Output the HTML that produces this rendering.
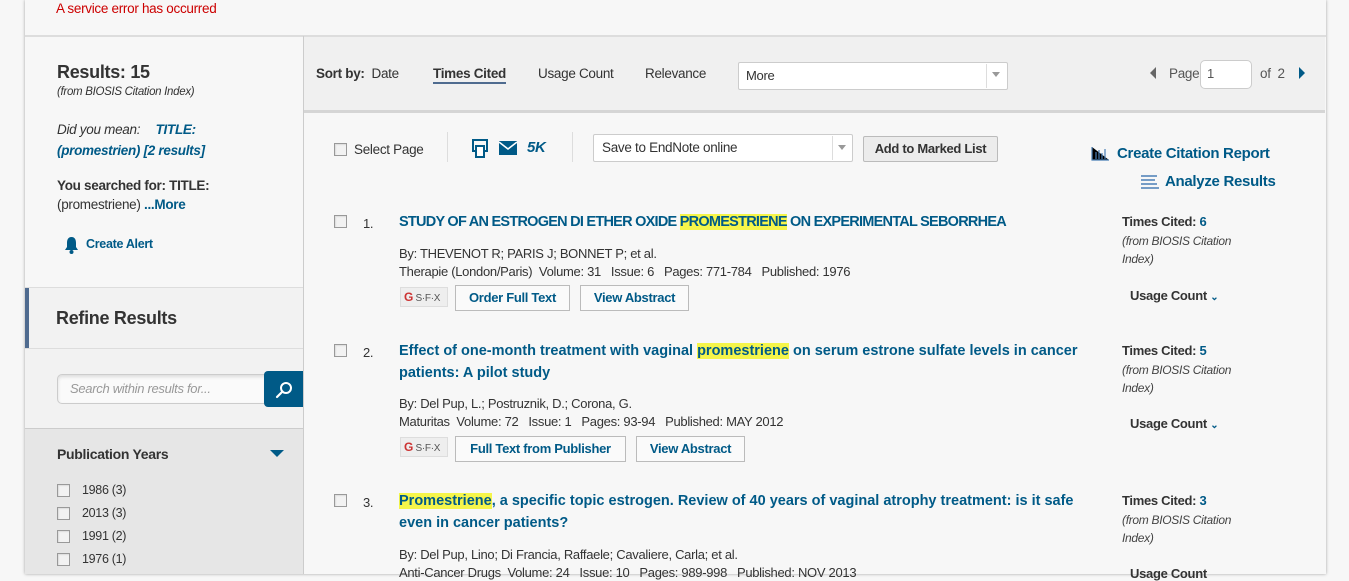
<!DOCTYPE html>
<html><head><meta charset="utf-8"><style>
*{box-sizing:border-box;margin:0;padding:0}
body{width:1349px;height:574px;overflow:hidden;background:#f7f7f7;font-family:"Liberation Sans",sans-serif;color:#333;position:relative;font-size:13px;letter-spacing:-0.3px}
.a{position:absolute;white-space:nowrap}
.wrap{position:absolute;left:25px;top:0;width:1301px;height:574px;background:#f7f7f7;box-shadow:0 0 3px rgba(0,0,0,.35)}
.blue{color:#005a87}
.b{font-weight:bold}
.cb{position:absolute;width:13px;height:13px;border:1px solid #999;background:#f2f2f2;box-shadow:inset 1px 1px 1px #ddd}
.btn{position:absolute;height:26px;border:1px solid #bbb;background:#fafafa;color:#005a87;font-weight:bold;font-size:13px;text-align:center;line-height:24px}
.hl{background:#f5f54a}
.title{color:#005a87;font-weight:bold;font-size:14.5px;letter-spacing:0}
.sfx{position:absolute;width:48px;height:20px;background:#eee;border:1px solid #ddd;font-size:10px;color:#555;line-height:18px;padding-left:3px}
.sfx i{color:#c33;font-style:normal;font-weight:bold;font-size:12px}
.tc{font-weight:bold;font-size:13px}
.it{font-style:italic;font-size:12px;color:#444;line-height:18px}
</style></head><body>
<div class="wrap"></div>
<div class="a" style="left:56px;top:1px;color:#cc0000;font-size:13.5px">A service error has occurred</div>
<div class="a" style="left:25px;top:35px;width:1301px;height:2px;background:#ddd"></div>
<!-- sidebar -->
<div class="a" style="left:303px;top:36px;width:1px;height:538px;background:#ccc"></div>
<div class="a b" style="left:57px;top:62px;font-size:18px;color:#333">Results: 15</div>
<div class="a" style="left:57px;top:86px;font-size:11.5px;font-style:italic">(from BIOSIS Citation Index)</div>
<div class="a" style="left:57px;top:122px;font-size:13.5px;font-style:italic">Did you mean: <span class="blue b" style="margin-left:12px">TITLE:</span></div>
<div class="a blue b" style="left:57px;top:143px;font-size:13.5px;font-style:italic">(promestrien) [2 results]</div>
<div class="a b" style="left:57px;top:178px;font-size:13.5px">You searched for: TITLE:</div>
<div class="a" style="left:57px;top:197px;font-size:13.5px">(promestriene) <span class="blue b">...More</span></div>
<svg class="a" style="left:63px;top:236px" width="17" height="18" viewBox="0 0 17 18"><path d="M8.5 1C5 1 4 4 4 7v4l-2 3h13l-2-3V7c0-3-1-6-4.5-6z" fill="#005a87"/><circle cx="8.5" cy="16" r="2" fill="#005a87"/></svg>
<div class="a blue b" style="left:86px;top:237px;font-size:12.5px">Create Alert</div>
<div class="a" style="left:25px;top:287px;width:278px;height:1px;background:#ddd"></div>
<div class="a" style="left:25px;top:288px;width:278px;height:60px;background:#f2f2f2;border-left:4px solid #4f6b8f"></div>
<div class="a b" style="left:56px;top:308px;font-size:18px">Refine Results</div>
<div class="a" style="left:25px;top:348px;width:278px;height:1px;background:#ddd"></div>
<div class="a" style="left:25px;top:349px;width:278px;height:79px;background:#f2f2f2"></div>
<div class="a" style="left:57px;top:374px;width:210px;height:30px;border:1px solid #ccc;border-radius:5px 0 0 5px;background:#fafafa;box-shadow:inset 0 2px 3px #ddd"></div>
<div class="a" style="left:70px;top:381px;font-size:13px;font-style:italic;color:#999">Search within results for...</div>
<div class="a" style="left:264px;top:371px;width:39px;height:36px;background:#005a87;border-radius:4px 0 0 4px"></div>
<svg class="a" style="left:274px;top:380px" width="20" height="20" viewBox="0 0 20 20"><circle cx="12" cy="8" r="5" fill="none" stroke="#fff" stroke-width="2"/><path d="M8.5 11.5L3 17" stroke="#fff" stroke-width="2.2" stroke-linecap="round"/></svg>
<div class="a" style="left:25px;top:428px;width:278px;height:1px;background:#ccc"></div>
<div class="a" style="left:25px;top:429px;width:278px;height:145px;background:#e6e6e6"></div>
<div class="a b" style="left:57px;top:446px;font-size:14px">Publication Years</div>
<div class="a" style="left:270px;top:450px;width:0;height:0;border-left:7px solid transparent;border-right:7px solid transparent;border-top:7px solid #005a87"></div>
<div class="cb" style="left:57px;top:484px"></div><div class="a" style="left:82px;top:483px;font-size:12.5px">1986 (3)</div>
<div class="cb" style="left:57px;top:507px"></div><div class="a" style="left:82px;top:506px;font-size:12.5px">2013 (3)</div>
<div class="cb" style="left:57px;top:530px"></div><div class="a" style="left:82px;top:529px;font-size:12.5px">1991 (2)</div>
<div class="cb" style="left:57px;top:553px"></div><div class="a" style="left:82px;top:552px;font-size:12.5px">1976 (1)</div>
<!-- sort bar -->
<div class="a" style="left:304px;top:37px;width:1021px;height:73px;background:#f0f0f0"></div>
<div class="a" style="left:304px;top:110px;width:1021px;height:3px;background:#d5d5d5"></div>
<div class="a" style="left:316px;top:66px;font-size:13.5px"><b>Sort by:</b>&nbsp; Date</div>
<div class="a b" style="left:433px;top:66px;font-size:13.5px;border-bottom:2px solid #4f6b8f;padding-bottom:1px">Times Cited</div>
<div class="a" style="left:538px;top:66px;font-size:13.5px">Usage Count</div>
<div class="a" style="left:645px;top:66px;font-size:13.5px">Relevance</div>
<div class="a" style="left:738px;top:62px;width:270px;height:28px;border:1px solid #ccc;background:#fff;border-radius:2px"></div>
<div class="a" style="left:746px;top:68px;font-size:13px">More</div>
<div class="a" style="left:986px;top:64px;width:1px;height:24px;background:#ddd"></div>
<div class="a" style="left:992px;top:72px;border-left:4px solid transparent;border-right:4px solid transparent;border-top:5px solid #999"></div>
<div class="a" style="left:1150px;top:67px;border-top:6px solid transparent;border-bottom:6px solid transparent;border-right:6px solid #666"></div>
<div class="a" style="left:1169px;top:66px;font-size:13.5px;color:#555">Page</div>
<div class="a" style="left:1200px;top:60px;width:52px;height:29px;border:1px solid #ccc;border-radius:5px;background:#fff"></div>
<div class="a" style="left:1207px;top:66px;font-size:13px;color:#555">1</div>
<div class="a" style="left:1260px;top:66px;font-size:13.5px;color:#555">of &nbsp;2</div>
<div class="a" style="left:1299px;top:67px;border-top:6px solid transparent;border-bottom:6px solid transparent;border-left:6px solid #005a87"></div>
<!-- toolbar -->
<div class="cb" style="left:334px;top:143px"></div>
<div class="a" style="left:354px;top:142px;font-size:13.5px">Select Page</div>
<div class="a" style="left:447px;top:132px;width:1px;height:30px;background:#ddd"></div>
<svg class="a" style="left:471px;top:139px" width="18" height="19" viewBox="0 0 18 19"><rect x="2" y="1" width="14" height="11" fill="none" stroke="#005a87" stroke-width="2"/><rect x="5" y="7" width="8" height="11" fill="#fff" stroke="#005a87" stroke-width="2"/></svg>
<svg class="a" style="left:499px;top:141px" width="18" height="14" viewBox="0 0 18 14"><rect x="0" y="0" width="18" height="14" fill="#005a87"/><path d="M0 1l9 7 9-7" fill="none" stroke="#fff" stroke-width="1.5"/></svg>
<div class="a blue b" style="left:527px;top:139px;font-size:15px;font-style:italic">5K</div>
<div class="a" style="left:572px;top:132px;width:1px;height:30px;background:#ddd"></div>
<div class="a" style="left:593px;top:134px;width:260px;height:28px;border:1px solid #ccc;background:#fff;border-radius:2px"></div>
<div class="a" style="left:602px;top:140px;font-size:13.5px">Save to EndNote online</div>
<div class="a" style="left:832px;top:136px;width:1px;height:24px;background:#ddd"></div>
<div class="a" style="left:838px;top:145px;border-left:4px solid transparent;border-right:4px solid transparent;border-top:5px solid #999"></div>
<div class="a b" style="left:863px;top:136px;width:135px;height:26px;border:1px solid #bbb;background:#ececec;border-radius:2px;text-align:center;line-height:24px;font-size:13px">Add to Marked List</div>
<svg class="a" style="left:1091px;top:146px" width="18" height="15" viewBox="0 0 18 15"><g stroke="#4a7fb5" stroke-width="1.2"><path d="M1 1v13h17"/><path d="M5 6v7M8 4v9M11 7v6M14 3v10"/></g></svg>
<div class="a blue b" style="left:1117px;top:145px;font-size:15px">Create Citation Report</div>
<svg class="a" style="left:1141px;top:174px" width="18" height="16" viewBox="0 0 18 16"><g stroke="#4a7fb5" stroke-width="1.6"><path d="M0 2h16M0 6h14M0 10h16M0 14h18"/></g></svg>
<div class="a blue b" style="left:1165px;top:173px;font-size:15px">Analyze Results</div>
<!-- record 1 -->
<div class="cb" style="left:334px;top:215px"></div>
<div class="a" style="left:363px;top:216px;font-size:13px">1.</div>
<div class="a title" style="left:399px;top:214px;letter-spacing:-0.75px">STUDY OF AN ESTROGEN DI ETHER OXIDE <span class="hl">PROMESTRIENE</span> ON EXPERIMENTAL SEBORRHEA</div>
<div class="a" style="left:399px;top:246px">By: THEVENOT R; PARIS J; BONNET P; et al.</div>
<div class="a" style="left:399px;top:264px">Therapie (London/Paris)&nbsp; Volume: 31&nbsp;&nbsp; Issue: 6&nbsp;&nbsp; Pages: 771-784&nbsp;&nbsp; Published: 1976</div>
<div class="sfx" style="left:400px;top:287px"><i>G</i> S·F·X</div>
<div class="btn" style="left:455px;top:285px;width:115px">Order Full Text</div>
<div class="btn" style="left:580px;top:285px;width:109px">View Abstract</div>
<div class="a tc" style="left:1122px;top:214px">Times Cited: <span class="blue">6</span></div>
<div class="a it" style="left:1122px;top:232px;white-space:normal;width:110px">(from BIOSIS Citation Index)</div>
<div class="a tc" style="left:1130px;top:288px">Usage Count <span class="blue" style="font-size:10px">&#8964;</span></div>
<!-- record 2 -->
<div class="cb" style="left:334px;top:344px"></div>
<div class="a" style="left:363px;top:345px;font-size:13px">2.</div>
<div class="a title" style="left:399px;top:343px">Effect of one-month treatment with vaginal <span class="hl">promestriene</span> on serum estrone sulfate levels in cancer</div>
<div class="a title" style="left:399px;top:365px">patients: A pilot study</div>
<div class="a" style="left:399px;top:396px">By: Del Pup, L.; Postruznik, D.; Corona, G.</div>
<div class="a" style="left:399px;top:414px">Maturitas&nbsp; Volume: 72&nbsp;&nbsp; Issue: 1&nbsp;&nbsp; Pages: 93-94&nbsp;&nbsp; Published: MAY 2012</div>
<div class="sfx" style="left:400px;top:437px"><i>G</i> S·F·X</div>
<div class="btn" style="left:455px;top:436px;width:171px">Full Text from Publisher</div>
<div class="btn" style="left:636px;top:436px;width:109px">View Abstract</div>
<div class="a tc" style="left:1122px;top:343px">Times Cited: <span class="blue">5</span></div>
<div class="a it" style="left:1122px;top:361px;white-space:normal;width:110px">(from BIOSIS Citation Index)</div>
<div class="a tc" style="left:1130px;top:416px">Usage Count <span class="blue" style="font-size:10px">&#8964;</span></div>
<!-- record 3 -->
<div class="cb" style="left:334px;top:494px"></div>
<div class="a" style="left:363px;top:495px;font-size:13px">3.</div>
<div class="a title" style="left:399px;top:493px"><span class="hl">Promestriene</span>, a specific topic estrogen. Review of 40 years of vaginal atrophy treatment: is it safe</div>
<div class="a title" style="left:399px;top:515px">even in cancer patients?</div>
<div class="a" style="left:399px;top:547px">By: Del Pup, Lino; Di Francia, Raffaele; Cavaliere, Carla; et al.</div>
<div class="a" style="left:399px;top:565px">Anti-Cancer Drugs&nbsp; Volume: 24&nbsp;&nbsp; Issue: 10&nbsp;&nbsp; Pages: 989-998&nbsp;&nbsp; Published: NOV 2013</div>
<div class="a tc" style="left:1122px;top:493px">Times Cited: <span class="blue">3</span></div>
<div class="a it" style="left:1122px;top:511px;white-space:normal;width:110px">(from BIOSIS Citation Index)</div>
<div class="a tc" style="left:1130px;top:566px">Usage Count</div>
</body></html>
